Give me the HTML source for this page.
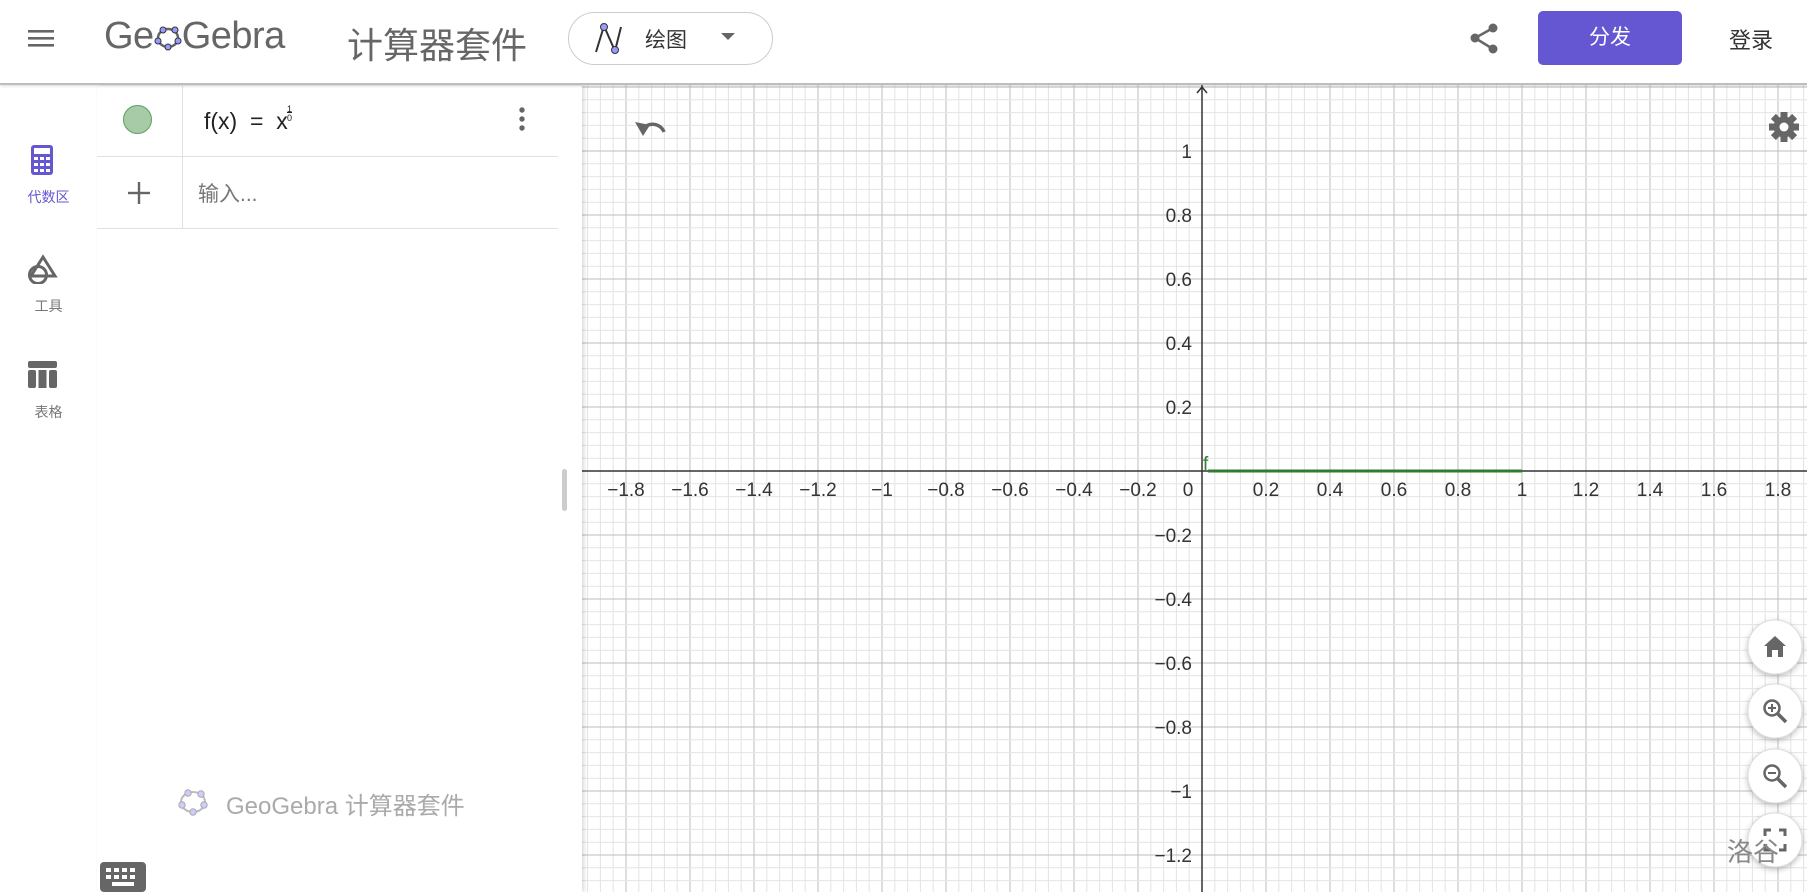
<!DOCTYPE html>
<html><head><meta charset="utf-8">
<style>
*{margin:0;padding:0;box-sizing:border-box}
body{width:1807px;height:892px;overflow:hidden;background:#fff;font-family:"Liberation Sans","Noto Sans CJK SC",sans-serif;position:relative}
.hdr{position:absolute;left:0;top:0;width:1807px;height:85px;background:#fff;border-bottom:2px solid #bdbdbd;box-shadow:0 1px 3px rgba(0,0,0,.15);z-index:5}
.abs{position:absolute}
.side{position:absolute;left:0;top:86px;width:97px;height:806px;background:#fff}
.alg{position:absolute;left:97px;top:86px;width:485px;height:806px;background:#fff;box-shadow:2px 0 4px rgba(0,0,0,.15)}
.lbl{font-size:14px;color:#777;text-align:center;width:97px;left:0}
</style></head><body>
<div class="hdr">
 <svg class="abs" style="left:28px;top:27px" width="28" height="22"><rect x="0" y="3" width="26" height="2.6" fill="#666"/><rect x="0" y="10" width="26" height="2.6" fill="#666"/><rect x="0" y="17" width="26" height="2.6" fill="#666"/></svg>
 <div class="abs" style="left:104px;top:15px;font-size:38px;color:#666;letter-spacing:-0.5px;white-space:nowrap">Ge<svg width="28" height="30" style="vertical-align:-4px"><ellipse cx="14" cy="16" rx="10" ry="9" fill="none" stroke="#666" stroke-width="2.5"/><g fill="#99f" stroke="#333" stroke-width="1"><circle cx="4" cy="19" r="3"/><circle cx="9" cy="8" r="3"/><circle cx="21" cy="8" r="3"/><circle cx="24" cy="19" r="3"/><circle cx="14" cy="25" r="3"/></g></svg>Gebra</div>
 <div class="abs" style="left:347px;top:17px;font-size:36px;color:#666">计算器套件</div>
 <div class="abs" style="left:568px;top:12px;width:205px;height:53px;border:1px solid #ccc;border-radius:27px"></div>
 <svg class="abs" style="left:591px;top:22px" width="34" height="34"><path d="M5 30 L13 4 L24 29 L30 5" fill="none" stroke="#333" stroke-width="2"/><circle cx="13" cy="5" r="3.5" fill="#99f" stroke="#333"/><circle cx="24" cy="28" r="3.5" fill="#99f" stroke="#333"/></svg>
 <div class="abs" style="left:645px;top:24px;font-size:21px;color:#333">绘图</div>
 <svg class="abs" style="left:721px;top:33px" width="14" height="9"><path d="M0 0 L14 0 L7 7Z" fill="#666"/></svg>
 <svg class="abs" style="left:1469px;top:22px" width="32" height="32"><circle cx="24" cy="6" r="4.5" fill="#666"/><circle cx="6" cy="16" r="4.5" fill="#666"/><circle cx="24" cy="27" r="4.5" fill="#666"/><path d="M24 6 L6 16 L24 27" fill="none" stroke="#666" stroke-width="2.5"/></svg>
 <div class="abs" style="left:1538px;top:11px;width:144px;height:54px;background:#6557d2;border-radius:5px;color:#fff;font-size:21px;text-align:center;line-height:54px">分发</div>
 <div class="abs" style="left:1729px;top:23px;font-size:22px;color:#333">登录</div>
</div>

<svg class="abs" style="left:582px;top:85px" width="1225" height="807" id="g"></svg>

<div class="side">
 <svg class="abs" style="left:31px;top:59px" width="22" height="30"><rect x="0" y="0" width="22" height="30" rx="3" fill="#6557d2"/><rect x="3" y="3" width="16" height="6" fill="#fff"/><g fill="#fff"><rect x="3" y="12" width="4" height="3"/><rect x="9" y="12" width="4" height="3"/><rect x="15" y="12" width="4" height="3"/><rect x="3" y="18" width="4" height="3"/><rect x="9" y="18" width="4" height="3"/><rect x="15" y="18" width="4" height="3"/><rect x="3" y="24" width="4" height="3"/><rect x="9" y="24" width="4" height="3"/><rect x="15" y="24" width="4" height="3"/></g></svg>
 <div class="abs lbl" style="top:101px;color:#6557d2">代数区</div>
 <svg class="abs" style="left:26px;top:168px" width="32" height="30"><path d="M17 3 L29 22 L5 22Z" fill="none" stroke="#666" stroke-width="3"/><circle cx="12" cy="21" r="8.5" fill="none" stroke="#666" stroke-width="3"/></svg>
 <div class="abs lbl" style="top:210px">工具</div>
 <svg class="abs" style="left:28px;top:275px" width="30" height="28"><rect x="0" y="0" width="29" height="7" rx="2" fill="#666"/><rect x="0" y="9" width="8" height="18" rx="2" fill="#666"/><rect x="10.5" y="9" width="8" height="18" fill="#666"/><rect x="21" y="9" width="8" height="18" rx="2" fill="#666"/></svg>
 <div class="abs lbl" style="top:316px">表格</div>
</div>

<div class="alg">
 <div class="abs" style="left:0;top:70px;width:461px;height:1px;background:#e0e0e0"></div>
 <div class="abs" style="left:0;top:142px;width:461px;height:1px;background:#e0e0e0"></div>
 <div class="abs" style="left:85px;top:0;width:1px;height:142px;background:#e0e0e0"></div>
 <div class="abs" style="left:26px;top:19px;width:29px;height:29px;border-radius:50%;background:#a8cba7;border:1.5px solid #5f9e5e"></div>
 <div class="abs" style="left:107px;top:22px;font-size:23px;color:#222">f(x) &nbsp;= &nbsp;x</div>
 <div class="abs" style="left:190px;top:19px;font-size:9px;color:#222;line-height:9px;text-align:center">1<br><span style="border-top:1px solid #222">0</span></div>
 <svg class="abs" style="left:421px;top:20px" width="8" height="28"><circle cx="4" cy="4" r="2.7" fill="#666"/><circle cx="4" cy="13" r="2.7" fill="#666"/><circle cx="4" cy="22" r="2.7" fill="#666"/></svg>
 <svg class="abs" style="left:30px;top:95px" width="24" height="24"><rect x="10.8" y="1" width="2.4" height="22" fill="#666"/><rect x="1" y="10.8" width="22" height="2.4" fill="#666"/></svg>
 <div class="abs" style="left:101px;top:92px;font-size:21px;color:#777">输入...</div>
 <div class="abs" style="left:465px;top:383px;width:5px;height:42px;background:#ccc;border-radius:3px"></div>
 <svg class="abs" style="left:80px;top:700px" width="32" height="32"><ellipse cx="16" cy="16" rx="12" ry="10" fill="none" stroke="#bbb" stroke-width="2"/><g fill="#ccf" stroke="#aaa"><circle cx="5" cy="19" r="3.2"/><circle cx="11" cy="7" r="3.2"/><circle cx="24" cy="8" r="3.2"/><circle cx="27" cy="19" r="3.2"/><circle cx="16" cy="26" r="3.2"/></g></svg>
 <div class="abs" style="left:129px;top:700px;font-size:24px;color:#aaa">GeoGebra 计算器套件</div>
</div>
<svg class="abs" style="left:100px;top:862px" width="46" height="30"><rect x="0" y="0" width="46" height="30" rx="4" fill="#666"/><g fill="#fff"><rect x="6" y="6" width="5" height="4"/><rect x="14" y="6" width="5" height="4"/><rect x="22" y="6" width="5" height="4"/><rect x="30" y="6" width="5" height="4"/><rect x="6" y="13" width="5" height="4"/><rect x="14" y="13" width="5" height="4"/><rect x="22" y="13" width="5" height="4"/><rect x="30" y="13" width="5" height="4"/><rect x="12" y="20" width="22" height="4"/></g></svg>

<script>
const g=document.getElementById('g');const W=1225,H=807,ox=620,oy=386,u=320;
let s='<rect width="1225" height="807" fill="#fff"/>';
for(let i=-60;i<=60;i++){const x=ox+i*u/25;if(x<0||x>W)continue;const maj=i%5==0;s+=`<line x1="${x}" y1="0" x2="${x}" y2="${H}" stroke="${maj?'#bdbdbd':'#e4e4e4'}" stroke-width="1"/>`;}
for(let i=-60;i<=60;i++){const y=oy-i*u/25;if(y<0||y>H)continue;const maj=i%5==0;s+=`<line x1="0" y1="${y}" x2="${W}" y2="${y}" stroke="${maj?'#bdbdbd':'#e4e4e4'}" stroke-width="1"/>`;}
s+=`<line x1="0" y1="${oy}" x2="${W}" y2="${oy}" stroke="#333" stroke-width="1.5"/><line x1="${ox}" y1="0" x2="${ox}" y2="${H}" stroke="#333" stroke-width="1.5"/>`;
s+=`<path d="M${ox-5} 8 L${ox} 2 L${ox+5} 8" fill="none" stroke="#333" stroke-width="1.5"/>`;
const fmt=v=>{let t=(Math.round(v*10)/10).toString();return t.replace('-','\u2212');};
const F='font-size="19" fill="#333" font-family="Liberation Sans"';
for(let i=-9;i<=9;i++){if(i==0)continue;const v=i*0.2;const x=ox+v*u;s+=`<text x="${x}" y="${oy+25}" text-anchor="middle" ${F}>${fmt(v)}</text>`;}
s+=`<text x="${ox-14}" y="${oy+25}" text-anchor="middle" ${F}>0</text>`;
for(let i=-6;i<=5;i++){if(i==0)continue;const v=i*0.2;const y=oy-v*u;s+=`<text x="${ox-10}" y="${y+7}" text-anchor="end" ${F}>${fmt(v)}</text>`;}
s+=`<line x1="${ox+6}" y1="${oy}" x2="${ox+u}" y2="${oy}" stroke="#2e7d32" stroke-width="3"/><text x="${ox+1}" y="${oy-1}" font-size="19" fill="#2e7d32" font-family="Liberation Sans">f</text>`;
s+=`<path d="M60 45 A12 11 0 0 1 82 47" fill="none" stroke="#666" stroke-width="3.5"/><path d="M53 37 L61 51 L68 40Z" fill="#666"/>`;
let gear='';for(let a=0;a<8;a++){gear+=`<rect x="-3.5" y="-15" width="7" height="8" fill="#666" transform="rotate(${a*45})"/>`;}
s+=`<g transform="translate(1202,42)">${gear}<circle r="10.5" fill="#666"/><circle r="4.5" fill="#fff"/></g>`;
const cy=[562,626,691,755];
cy.forEach((c,k)=>{s+=`<circle cx="1193" cy="${c}" r="27" fill="#fff" stroke="#ddd" stroke-width="1" style="filter:drop-shadow(0 2px 3px rgba(0,0,0,.25))"/>`;
const X=1193,Y=c;
if(k==0)s+=`<path d="M${X-11} ${Y-1} L${X} ${Y-11} L${X+11} ${Y-1} L${X+8} ${Y-1} L${X+8} ${Y+10} L${X+3} ${Y+10} L${X+3} ${Y+3} L${X-3} ${Y+3} L${X-3} ${Y+10} L${X-8} ${Y+10} L${X-8} ${Y-1}Z" fill="#666"/>`;
if(k==1||k==2){s+=`<circle cx="${X-3}" cy="${Y-3}" r="7.5" fill="none" stroke="#666" stroke-width="2.5"/><line x1="${X+3}" y1="${Y+3}" x2="${X+11}" y2="${Y+11}" stroke="#666" stroke-width="3.5"/><line x1="${X-7}" y1="${Y-3}" x2="${X+1}" y2="${Y-3}" stroke="#666" stroke-width="2"/>`;if(k==1)s+=`<line x1="${X-3}" y1="${Y-7}" x2="${X-3}" y2="${Y+1}" stroke="#666" stroke-width="2"/>`;}
if(k==3)s+=`<path d="M${X-10} ${Y-4} V${Y-10} H${X-4} M${X+4} ${Y-10} H${X+10} V${Y-4} M${X+10} ${Y+4} V${Y+10} H${X+4} M${X-4} ${Y+10} H${X-10} V${Y+4}" fill="none" stroke="#666" stroke-width="3"/>`;});
s+=`<text x="1145" y="776" font-size="26" fill="#888" font-family="Noto Sans CJK SC">洛谷</text>`;
g.innerHTML=s;
</script>
</body></html>
